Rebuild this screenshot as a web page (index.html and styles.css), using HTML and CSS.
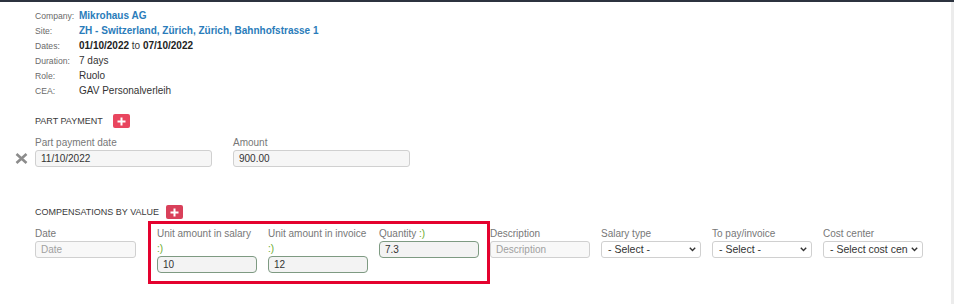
FILE: index.html
```html
<!DOCTYPE html>
<html lang="en">
<head>
<meta charset="utf-8">
<title>Assignment</title>
<link rel="stylesheet" href="styles.css">
</head>
<body>
<div class="topbar"></div>
<div class="scrollstrip"></div>
<main class="page">
  <dl class="info">
    <dt>Company:</dt><dd class="link">Mikrohaus AG</dd>
    <dt>Site:</dt><dd class="link">ZH - Switzerland, Zürich, Zürich, Bahnhofstrasse 1</dd>
    <dt>Dates:</dt><dd><b>01/10/2022</b> to <b>07/10/2022</b></dd>
    <dt>Duration:</dt><dd>7 days</dd>
    <dt>Role:</dt><dd>Ruolo</dd>
    <dt>CEA:</dt><dd>GAV Personalverleih</dd>
  </dl>

  <section class="section part">
    <div class="heading">
      <span>PART PAYMENT</span>
      <button class="add" type="button" aria-label="Add"><svg width="9" height="9" viewBox="0 0 9 9"><path d="M4.5 0.5v8M0.5 4.5h8" stroke="#fff" stroke-width="2"/></svg></button>
    </div>
    <div class="part-row">
      <div class="remove"><svg width="13" height="11" viewBox="0 0 13 11"><path d="M1.5 1l10 9M11.5 1l-10 9" stroke="#8c8c8c" stroke-width="2.6" stroke-linecap="butt"/></svg></div>
      <div class="field wide">
        <label>Part payment date</label>
        <div class="input">11/10/2022</div>
      </div>
      <div class="field wide">
        <label>Amount</label>
        <div class="input">900.00</div>
      </div>
    </div>
  </section>

  <section class="section comp">
    <div class="heading">
      <span>COMPENSATIONS BY VALUE</span>
      <button class="add dark" type="button" aria-label="Add"><svg width="9" height="9" viewBox="0 0 9 9"><path d="M4.5 0.5v8M0.5 4.5h8" stroke="#fff" stroke-width="2"/></svg></button>
    </div>
    <div class="comp-row">
      <div class="field datecol">
        <label>Date</label>
        <div class="input ph">Date</div>
      </div>
      <div class="highlight">
        <div class="field">
          <label>Unit amount in salary <span class="smile">:)</span></label>
          <div class="input hl">10</div>
        </div>
        <div class="field">
          <label>Unit amount in invoice <span class="smile">:)</span></label>
          <div class="input hl">12</div>
        </div>
        <div class="field">
          <label>Quantity <span class="smile">:)</span></label>
          <div class="input hl">7.3</div>
        </div>
      </div>
      <div class="field">
        <label>Description</label>
        <div class="input ph">Description</div>
      </div>
      <div class="field">
        <label>Salary type</label>
        <div class="select"><span>- Select -</span><svg width="7" height="5" viewBox="0 0 7 5"><path d="M0.8 0.8l2.7 2.7 2.7-2.7" fill="none" stroke="#333" stroke-width="1.4"/></svg></div>
      </div>
      <div class="field">
        <label>To pay/invoice</label>
        <div class="select"><span>- Select -</span><svg width="7" height="5" viewBox="0 0 7 5"><path d="M0.8 0.8l2.7 2.7 2.7-2.7" fill="none" stroke="#333" stroke-width="1.4"/></svg></div>
      </div>
      <div class="field">
        <label>Cost center</label>
        <div class="select"><span>- Select cost cen</span><svg width="7" height="5" viewBox="0 0 7 5"><path d="M0.8 0.8l2.7 2.7 2.7-2.7" fill="none" stroke="#333" stroke-width="1.4"/></svg></div>
      </div>
    </div>
  </section>
</main>
</body>
</html>
```

FILE: styles.css
```css
* { box-sizing: border-box; }

html, body {
  margin: 0;
  padding: 0;
  background: #fff;
}

body {
  font-family: "Liberation Sans", Arial, sans-serif;
  color: #333;
  width: 954px;
  height: 304px;
  overflow: hidden;
  position: relative;
}

.topbar {
  height: 2px;
  background: #2c333f;
}

.scrollstrip {
  position: absolute;
  top: 2px;
  right: 0;
  width: 3px;
  bottom: 0;
  background: #ececec;
}

.page {
  padding: 6px 0 0 35px;
}

/* info block */
.info {
  display: grid;
  grid-template-columns: 44px auto;
  grid-auto-rows: 15px;
  margin: 0;
  align-items: center;
}

.info dt {
  font-size: 8.6px;
  color: #6a6a6a;
}

.info dd {
  margin: 0;
  font-size: 10px;
  color: #333;
}

.info dd b {
  font-weight: bold;
  color: #222;
}

.info dd.link {
  font-weight: bold;
  color: #2a7cba;
}

/* sections */
.section .heading {
  display: flex;
  align-items: center;
  gap: 10px;
  height: 16px;
  font-size: 9px;
  color: #3a3a3a;
}

.part { margin-top: 15px; }
.comp { margin-top: 37px; }

.add {
  width: 17px;
  height: 14px;
  border: 0;
  padding: 0;
  border-radius: 2px;
  background: #e9465f;
  display: flex;
  align-items: center;
  justify-content: center;
}

.add.dark { background: #d9405a; }

.comp .heading { gap: 7px; }

/* fields */
.field {
  display: flex;
  flex-direction: column;
  width: 102px;
}

.field label {
  font-size: 10px;
  line-height: 15px;
  color: #777;
}

.smile { color: #6aab2c; }

.input, .select {
  height: 17px;
  width: 100px;
  border: 1px solid #d0d0d0;
  border-radius: 3px;
  background: #f6f6f6;
  font-size: 10px;
  line-height: 15px;
  padding: 0 5px;
  color: #333;
  white-space: nowrap;
  overflow: hidden;
}

.input.ph { color: #a0a0a0; background: #f8f8f8; }

.input.hl {
  border-color: #7e9a82;
  border-radius: 4px;
  background: #f3f3f3;
}

.select {
  display: flex;
  align-items: center;
  justify-content: space-between;
  background: #fff;
  padding: 0 4px 0 6px;
  font-size: 10.5px;
}

.select span {
  white-space: nowrap;
  flex: 1;
}

.select svg { flex: none; margin-left: 3px; }

/* part payment row */
.part .heading { margin-bottom: 6px; }

.part-row {
  display: flex;
  margin-left: -21px;
  gap: 21px;
}

.part-row .remove {
  width: 21px;
  margin-right: -21px;
  height: 17px;
  align-self: flex-end;
  display: flex;
  align-items: center;
  padding-left: 1px;
}

.field.wide { width: 177px; }
.field.wide .input { width: 177px; }

/* compensations row */
.comp .heading { margin-bottom: 6px; }

.comp-row {
  display: flex;
  align-items: flex-start;
  gap: 9px;
}

.field.datecol { width: 113px; }
.field.datecol .input { width: 101px; }

.highlight {
  position: relative;
  display: flex;
  gap: 9px;
  align-items: flex-start;
}

.highlight::before {
  content: "";
  position: absolute;
  top: -5px;
  left: -9px;
  right: -9px;
  bottom: -11px;
  border: 3px solid #e4022e;
  pointer-events: none;
}
```
